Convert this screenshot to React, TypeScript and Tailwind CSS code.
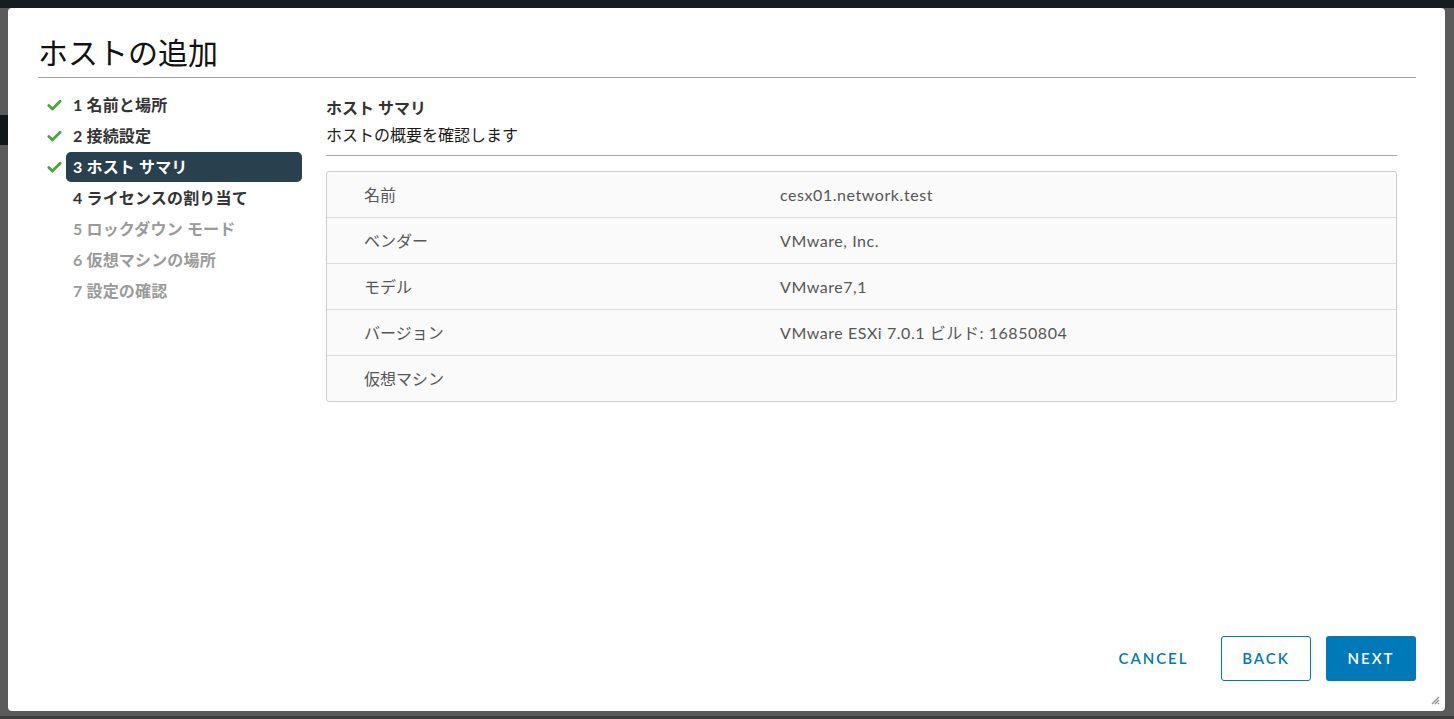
import { Check } from 'lucide-react'

const FONT = "font-['Lato','Noto_Sans_CJK_JP',sans-serif]"

const STEPS = [
  { n: 1, label: '名前と場所', done: true },
  { n: 2, label: '接続設定', done: true },
  { n: 3, label: 'ホスト サマリ', done: true, active: true },
  { n: 4, label: 'ライセンスの割り当て' },
  { n: 5, label: 'ロックダウン モード', disabled: true },
  { n: 6, label: '仮想マシンの場所', disabled: true },
  { n: 7, label: '設定の確認', disabled: true },
]

const ROWS = [
  ['名前', 'cesx01.network.test'],
  ['ベンダー', 'VMware, Inc.'],
  ['モデル', 'VMware7,1'],
  ['バージョン', 'VMware ESXi 7.0.1 ビルド: 16850804'],
  ['仮想マシン', ''],
]

function Nav() {
  return (
    <div className="flex w-[264px] shrink-0 flex-col gap-[1px] pt-[12px]">
      {STEPS.map((s) => (
        <div key={s.n} className="flex h-[30px] items-center">
          <div className="flex w-[28px] justify-center pl-[5px]">
            {s.done && <Check size={17} strokeWidth={4} className="text-[#45a83b]" />}
          </div>
          <div
            className={`flex h-[30px] flex-1 items-center rounded-[5px] px-[7px] text-[16px] font-bold tracking-[0.01em] ${
              s.active ? 'bg-[#29404f] text-white' : s.disabled ? 'text-[#9a9a9a]' : 'text-[#333333]'
            }`}
          >
            {s.n} {s.label}
          </div>
        </div>
      ))}
    </div>
  )
}

function Summary() {
  return (
    <div className="flex flex-1 flex-col pr-[19px] pt-[18px]">
      <div className="border-b border-[#a8a8a8] pb-[8px]">
        <div className="text-[16px] font-bold leading-[24px] text-[#333333]">ホスト サマリ</div>
        <div className="mt-[3px] text-[16px] leading-[24px] text-[#1b1b1b]">ホストの概要を確認します</div>
      </div>
      <div className="mt-[15px] overflow-hidden rounded-[3px] border border-[#cccccc] bg-[#fafafa]">
        {ROWS.map(([k, v], i) => (
          <div
            key={k}
            className={`flex h-[45px] items-center text-[16px] text-[#565656] ${
              i < ROWS.length - 1 ? 'box-content border-b border-[#dddddd]' : ''
            }`}
          >
            <div className="w-[453px] pl-[37px]">{k}</div>
            <div className="tracking-[0.035em]">{v}</div>
          </div>
        ))}
      </div>
    </div>
  )
}

export default function App() {
  return (
    <div className={`relative h-[719px] w-[1454px] overflow-hidden bg-[#5b5b5b] ${FONT}`}>
      <div className="h-[8px] bg-[#161c21]" />
      <div className="mt-[107px] h-[30px] w-[8px] bg-[#111719]" />
      <div className="absolute bottom-0 left-0 h-[3px] w-full bg-[#3e3e3e]" />

      <div className="absolute left-[8px] top-[8px] flex h-[703px] w-[1437px] flex-col rounded-[4px] bg-white pl-[30px] pr-[29px]">
        <div className="border-b border-[#a0a0a0] pb-[5px] pt-[24px] text-[30px] leading-[40px] text-[#111111]">
          ホストの追加
        </div>

        <div className="flex flex-1 gap-[24px]">
          <Nav />
          <Summary />
        </div>

        <div className="flex justify-end gap-[15px] pb-[30px] text-[15px] font-semibold tracking-[0.13em]">
          <button className="h-[45px] w-[105px] text-[#0079b8]">CANCEL</button>
          <button className="h-[45px] w-[90px] rounded-[3px] border border-[#0079b8] text-[#0079b8]">BACK</button>
          <button className="h-[45px] w-[90px] rounded-[3px] bg-[#0079b8] text-white">NEXT</button>
        </div>

        <svg className="absolute bottom-[6px] right-[5px]" width="9" height="9" viewBox="0 0 9 9">
          <path d="M8 1L1 8M8 4L4 8M8 7L7 8" stroke="#8a8a8a" strokeWidth="1.2" />
        </svg>
      </div>
    </div>
  )
}
